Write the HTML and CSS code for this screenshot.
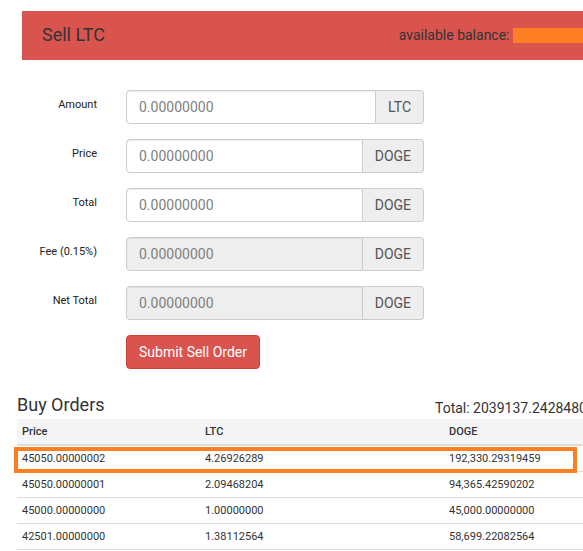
FILE: index.html
```html
<!DOCTYPE html>
<html lang="en">
<head>
<meta charset="utf-8">
<title>Sell LTC</title>
<link rel="stylesheet" href="styles.css">
</head>
<body>
  <div class="panel-head">
    <h2 class="panel-title">Sell LTC</h2>
    <div class="balance">
      <span class="balance-label">available balance: </span>
      <span class="balance-mask"></span>
    </div>
  </div>

  <form class="order-form">
    <label class="control-label">Amount</label>
    <div class="input-group">
      <input class="form-control" type="text" value="0.00000000">
      <span class="addon">LTC</span>
    </div>

    <label class="control-label">Price</label>
    <div class="input-group">
      <input class="form-control" type="text" value="0.00000000">
      <span class="addon">DOGE</span>
    </div>

    <label class="control-label">Total</label>
    <div class="input-group">
      <input class="form-control" type="text" value="0.00000000">
      <span class="addon">DOGE</span>
    </div>

    <label class="control-label">Fee (0.15%)</label>
    <div class="input-group">
      <input class="form-control" type="text" value="0.00000000" disabled>
      <span class="addon">DOGE</span>
    </div>

    <label class="control-label">Net Total</label>
    <div class="input-group">
      <input class="form-control" type="text" value="0.00000000" disabled>
      <span class="addon">DOGE</span>
    </div>

    <button class="btn-sell" type="button">Submit Sell Order</button>
  </form>

  <section class="orders">
    <div class="orders-head">
      <h3 class="orders-title">Buy Orders</h3>
      <div class="orders-total">Total: 2039137.24284800 DOGE</div>
    </div>
    <div class="table-wrap">
      <table class="orders-table">
        <thead>
          <tr><th class="col-price">Price</th><th class="col-ltc">LTC</th><th>DOGE</th></tr>
        </thead>
        <tbody>
          <tr><td>45050.00000002</td><td>4.26926289</td><td>192,330.29319459</td></tr>
          <tr><td>45050.00000001</td><td>2.09468204</td><td>94,365.42590202</td></tr>
          <tr><td>45000.00000000</td><td>1.00000000</td><td>45,000.00000000</td></tr>
          <tr><td>42501.00000000</td><td>1.38112564</td><td>58,699.22082564</td></tr>
        </tbody>
      </table>
      <div class="highlight"></div>
    </div>
  </section>
</body>
</html>
```

FILE: styles.css
```css
html, body {
  overflow: hidden;
}

body {
  margin: 0;
  font-family: Roboto, "Liberation Sans", Arial, sans-serif;
  color: #333;
  background: #fff;
}

/* Header panel */
.panel-head {
  margin: 11px 0 0 22px;
  width: 600px;
  height: 49px;
  box-sizing: border-box;
  padding: 0 17px 2px 20px;
  background: #d9534f;
  display: flex;
  align-items: center;
}

.panel-title {
  margin: 0;
  font-size: 18px;
  font-weight: 400;
  line-height: 20px;
  color: #333;
}

.balance {
  margin-left: auto;
  display: flex;
  align-items: center;
  font-size: 14px;
  line-height: 20px;
  color: #333;
  white-space: pre;
}

.balance-mask {
  display: inline-block;
  width: 92px;
  height: 15px;
  background: #fe7f22;
  margin-top: 2px;
}

/* Form */
.order-form {
  margin-top: 30px;
  display: grid;
  grid-template-columns: 97px 298px;
  column-gap: 29px;
  row-gap: 15px;
}

.control-label {
  text-align: right;
  padding-top: 7px;
  font-size: 11px;
  font-weight: 400;
  line-height: 15.7px;
  color: #222;
}

.input-group {
  display: flex;
  height: 34px;
}

.form-control {
  flex: 1;
  min-width: 0;
  box-sizing: border-box;
  height: 34px;
  margin: 0;
  padding: 6px 12px;
  border: 1px solid #ccc;
  border-radius: 4px 0 0 4px;
  box-shadow: inset 0 1px 1px rgba(0, 0, 0, 0.075);
  font-family: Roboto, "Liberation Sans", Arial, sans-serif;
  font-size: 14px;
  color: #7f7f7f;
  background: #fff;
  outline: none;
}

.form-control:disabled {
  background: #eee;
  color: #7f7f7f;
  -webkit-text-fill-color: #7f7f7f;
  opacity: 1;
}

.addon {
  display: flex;
  align-items: center;
  box-sizing: border-box;
  padding: 6px 12px;
  background: #eee;
  border: 1px solid #ccc;
  border-left: 0;
  border-radius: 0 4px 4px 0;
  font-size: 14px;
  line-height: 20px;
  color: #555;
}

.btn-sell {
  grid-column: 2;
  justify-self: start;
  margin: 0;
  padding: 6px 12px;
  background: #d9534f;
  border: 1px solid #d43f3a;
  border-radius: 4px;
  color: #fff;
  font-family: Roboto, "Liberation Sans", Arial, sans-serif;
  font-size: 14px;
  line-height: 20px;
}

/* Orders */
.orders {
  margin: 26px 0 0 17px;
  width: 640px;
}

.orders-head {
  display: flex;
  align-items: flex-start;
  height: 20px;
  margin-bottom: 4px;
}

.orders-title {
  flex: 0 0 418px;
  margin: 0;
  font-size: 18px;
  font-weight: 400;
  line-height: 20px;
  color: #333;
}

.orders-total {
  margin-top: 3px;
  font-size: 14px;
  line-height: 20px;
  white-space: nowrap;
  color: #333;
}

.table-wrap {
  position: relative;
}

.orders-table {
  width: 100%;
  border-collapse: collapse;
  font-size: 11px;
  line-height: 15px;
  color: #333;
}

.orders-table th {
  text-align: left;
  font-weight: 500;
  background: #f5f5f5;
  padding: 5px;
  border-bottom: 2px solid #ddd;
}

.orders-table .col-price { width: 173px; }
.orders-table .col-ltc { width: 234px; }

.orders-table td {
  padding: 5px;
  border-top: 1px solid #ddd;
}

.orders-table tbody tr:last-child td {
  border-bottom: 1px solid #ddd;
}

.highlight {
  position: absolute;
  left: -3px;
  top: 28px;
  width: 563px;
  height: 26px;
  box-sizing: border-box;
  border: 4px solid #fe7f22;
}
```
